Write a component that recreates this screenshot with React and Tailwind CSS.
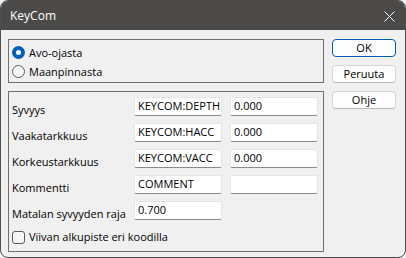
import React from 'react';

const font = { fontFamily: '"Open Sans", "Noto Sans", sans-serif' };

function Radio({ checked, label }) {
  return (
    <div className="flex items-center h-[19px]">
      {checked ? (
        <span className="w-[13px] h-[13px] rounded-full bg-[#005fb8] flex items-center justify-center">
          <span className="w-[5px] h-[5px] rounded-full bg-white" />
        </span>
      ) : (
        <span className="w-[13px] h-[13px] rounded-full border border-[#5c5c5c] bg-[#f7f7f7]" />
      )}
      <span className="ml-[4px] text-[11px] leading-[16px] text-black">{label}</span>
    </div>
  );
}

function Field({ value }) {
  return (
    <div className="w-[88px] h-[19px] bg-white border border-[#e5e5e5] border-b-[#8a8a8a] rounded-[2px] px-[3px] text-[11px] leading-[16px] text-black">
      {value}
    </div>
  );
}

function Row({ label, a, b }) {
  return (
    <div className="flex h-[19px] items-start">
      <div className="w-[122px] pt-[5px] text-[11px] leading-[16px] text-black whitespace-nowrap">{label}</div>
      <div className="flex gap-[8px]">
        <Field value={a} />
        {b !== undefined && <Field value={b} />}
      </div>
    </div>
  );
}

function Button({ children, primary }) {
  return (
    <div
      className={`w-[64px] h-[18px] rounded-[4px] bg-[#fdfdfd] flex items-center justify-center text-[11px] leading-[16px] text-black border ${
        primary ? 'border-[#005fb8]' : 'border-[#d5d5d5] border-b-[#b8b8b8]'
      }`}
    >
      {children}
    </div>
  );
}

export default function App() {
  return (
    <div className="w-[406px] h-[258px] bg-[#f0f0f0]" style={font}>
      <div className="w-[406px] h-[258px] rounded-[8px] border border-[#4f4e4c] bg-[#f0f0f0] overflow-hidden flex flex-col">
        <div className="h-[29px] bg-[#4b4a48] flex items-center justify-between pl-[9px] pr-[10px]">
          <span className="text-white text-[12px] leading-[16px] pt-[1px]">KeyCom</span>
          <svg width="11" height="11" viewBox="0 0 11 11" className="mt-[1px]">
            <path d="M0.5 0.5 L10.5 10.5 M10.5 0.5 L0.5 10.5" stroke="#ffffff" strokeWidth="1" fill="none" />
          </svg>
        </div>

        <div className="flex pl-[7px] pt-[9px] gap-[8px]">
          <div className="w-[316px] flex flex-col gap-[8px]">
            <div className="h-[44px] border border-[#707070] flex flex-col pl-[3px] pt-[3px]">
              <Radio checked label="Avo-ojasta" />
              <Radio label="Maanpinnasta" />
            </div>

            <div className="h-[161px] border border-[#707070] flex flex-col gap-[7px] pl-[3px] pt-[5px]">
              <Row label="Syvyys" a="KEYCOM:DEPTH" b="0.000" />
              <Row label="Vaakatarkkuus" a="KEYCOM:HACC" b="0.000" />
              <Row label="Korkeustarkkuus" a="KEYCOM:VACC" b="0.000" />
              <Row label="Kommentti" a="COMMENT" b="" />
              <Row label="Matalan syvyyden raja" a="0.700" />
              <div className="flex items-center mt-[2px]">
                <span className="w-[13px] h-[13px] rounded-[3px] border border-[#5c5c5c] bg-[#f7f7f7]" />
                <span className="ml-[4px] text-[11px] leading-[16px] text-black">Viivan alkupiste eri koodilla</span>
              </div>
            </div>
          </div>

          <div className="flex flex-col gap-[8px]">
            <Button primary>OK</Button>
            <Button>Peruuta</Button>
            <Button>Ohje</Button>
          </div>
        </div>
      </div>
    </div>
  );
}
